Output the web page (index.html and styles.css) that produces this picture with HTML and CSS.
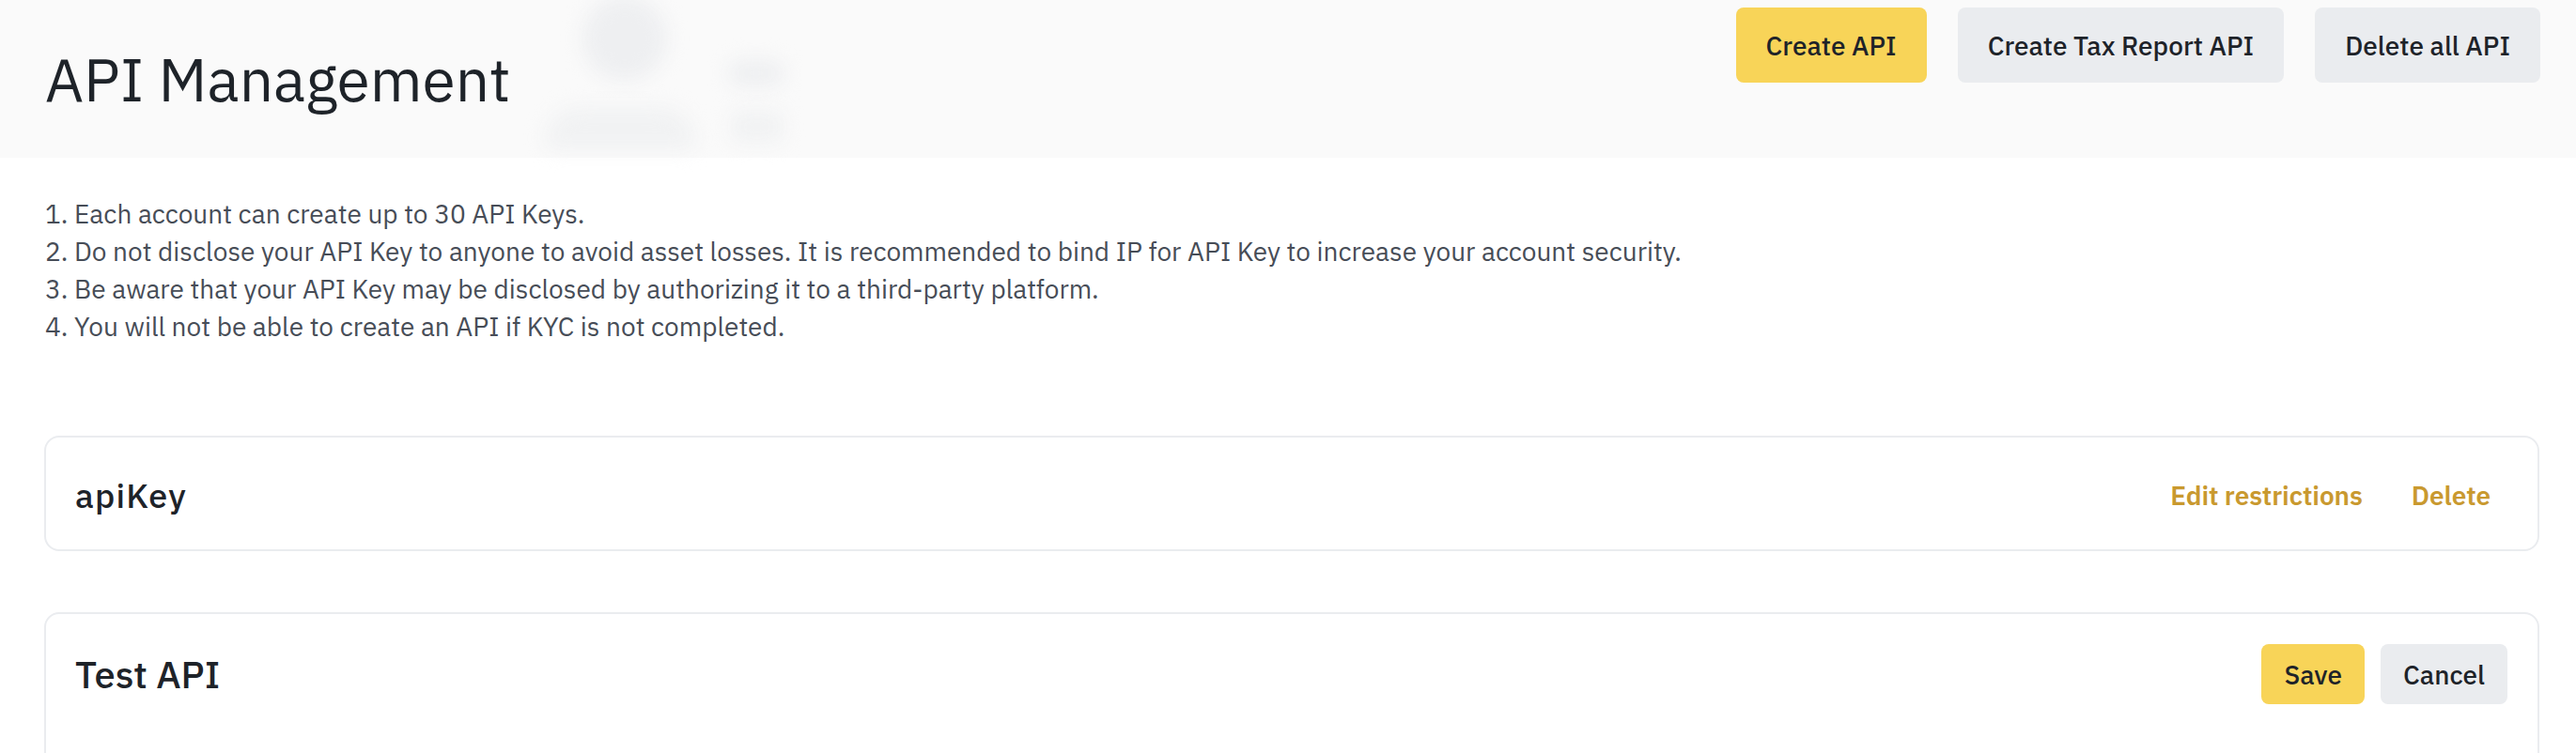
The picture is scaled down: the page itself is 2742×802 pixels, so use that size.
FILE: index.html
```html
<!DOCTYPE html>
<html lang="en">
<head>
<meta charset="utf-8">
<title>API Management</title>
<link rel="stylesheet" href="styles.css">
</head>
<body>
<header class="page-header">
  <div class="decor" aria-hidden="true">
    <span class="blob blob-head"></span>
    <span class="blob blob-small"></span>
    <span class="blob blob-body"></span>
    <span class="blob blob-small2"></span>
  </div>
  <h1 class="page-title">API Management</h1>
  <div class="header-actions">
    <button class="btn btn-primary btn-lg">Create API</button>
    <button class="btn btn-secondary btn-lg">Create Tax Report API</button>
    <button class="btn btn-secondary btn-lg">Delete all API</button>
  </div>
</header>

<main class="content">
  <ol class="notes">
    <li>1. Each account can create up to 30 API Keys.</li>
    <li>2. Do not disclose your API Key to anyone to avoid asset losses. It is recommended to bind IP for API Key to increase your account security.</li>
    <li>3. Be aware that your API Key may be disclosed by authorizing it to a third-party platform.</li>
    <li>4. You will not be able to create an API if KYC is not completed.</li>
  </ol>

  <section class="card card-key">
    <h2 class="card-title">apiKey</h2>
    <div class="card-links">
      <a class="link" href="#">Edit restrictions</a>
      <a class="link" href="#">Delete</a>
    </div>
  </section>

  <section class="card card-edit">
    <div class="card-head">
      <h2 class="card-title card-title-lg">Test API</h2>
      <div class="card-buttons">
        <button class="btn btn-primary btn-md">Save</button>
        <button class="btn btn-secondary btn-md">Cancel</button>
      </div>
    </div>
    <div class="card-body"></div>
  </section>
</main>
</body>
</html>
```
FILE: styles.css
```css
html, body {
  margin: 0;
  padding: 0;
  background: #ffffff;
}
body {
  font-family: "IBM Plex Sans", Roboto, "Noto Sans", sans-serif;
  color: #1e2329;
  overflow: hidden;
}

.page-header {
  position: relative;
  height: 168px;
  box-sizing: border-box;
  background: #fafafa;
  display: flex;
  justify-content: space-between;
  align-items: flex-start;
  padding: 0 38px 0 48px;
}
.decor {
  position: absolute;
  left: 560px;
  top: 0;
  width: 320px;
  height: 168px;
  pointer-events: none;
}
.blob {
  position: absolute;
  background: #eeeff1;
  filter: blur(10px);
  border-radius: 50%;
}
.blob-head { left: 60px; top: -4px; width: 90px; height: 90px; }
.blob-small { left: 215px; top: 64px; width: 60px; height: 28px; border-radius: 14px; }
.blob-body { left: 20px; top: 114px; width: 160px; height: 46px; border-radius: 40px 40px 10px 10px; background: #f1f2f3; }
.blob-small2 { left: 218px; top: 118px; width: 56px; height: 34px; border-radius: 10px; background: #f1f2f3; }

.page-title {
  position: relative;
  margin: 0;
  align-self: center;
  font-size: 64px;
  font-weight: 400;
  line-height: 1;
  color: #1e2329;
  letter-spacing: 0;
}
.header-actions {
  position: relative;
  display: flex;
  gap: 33px;
  margin-top: 8px;
}

.btn {
  border: none;
  font-family: inherit;
  font-weight: 500;
  color: #1e2329;
  border-radius: 8px;
  cursor: pointer;
}
.btn-lg {
  height: 80px;
  padding: 0 32px;
  font-size: 28px;
}
.btn-md {
  height: 64px;
  padding: 0 24px;
  font-size: 28px;
}
.btn-primary { background: #f8d458; }
.btn-secondary { background: #eaecef; }

.content {
  padding: 0 39px 0 47px;
}
.notes {
  list-style: none;
  margin: 0;
  padding: 40px 0 0 1px;
  font-size: 28px;
  line-height: 40px;
  color: #474d57;
}

.card {
  border: 2px solid #eaecef;
  border-radius: 16px;
  box-sizing: border-box;
}
.card-key {
  margin-top: 96px;
  height: 123px;
  display: flex;
  align-items: center;
  justify-content: space-between;
  padding: 4px 50px 0 31px;
}
.card-title {
  margin: 0;
  font-size: 36px;
  font-weight: 500;
  letter-spacing: 1.2px;
  line-height: 1.2;
}
.card-title-lg {
  font-size: 40px;
  letter-spacing: 0;
}
.card-links {
  display: flex;
  gap: 52px;
}
.link {
  font-size: 28px;
  font-weight: 600;
  color: #c9992f;
  text-decoration: none;
  letter-spacing: -0.1px;
}

.card-edit {
  margin-top: 65px;
  height: 300px;
  padding: 32px 32px 0 31px;
}
.card-head {
  display: flex;
  justify-content: space-between;
  align-items: center;
}
.card-buttons {
  display: flex;
  gap: 17px;
}
```
